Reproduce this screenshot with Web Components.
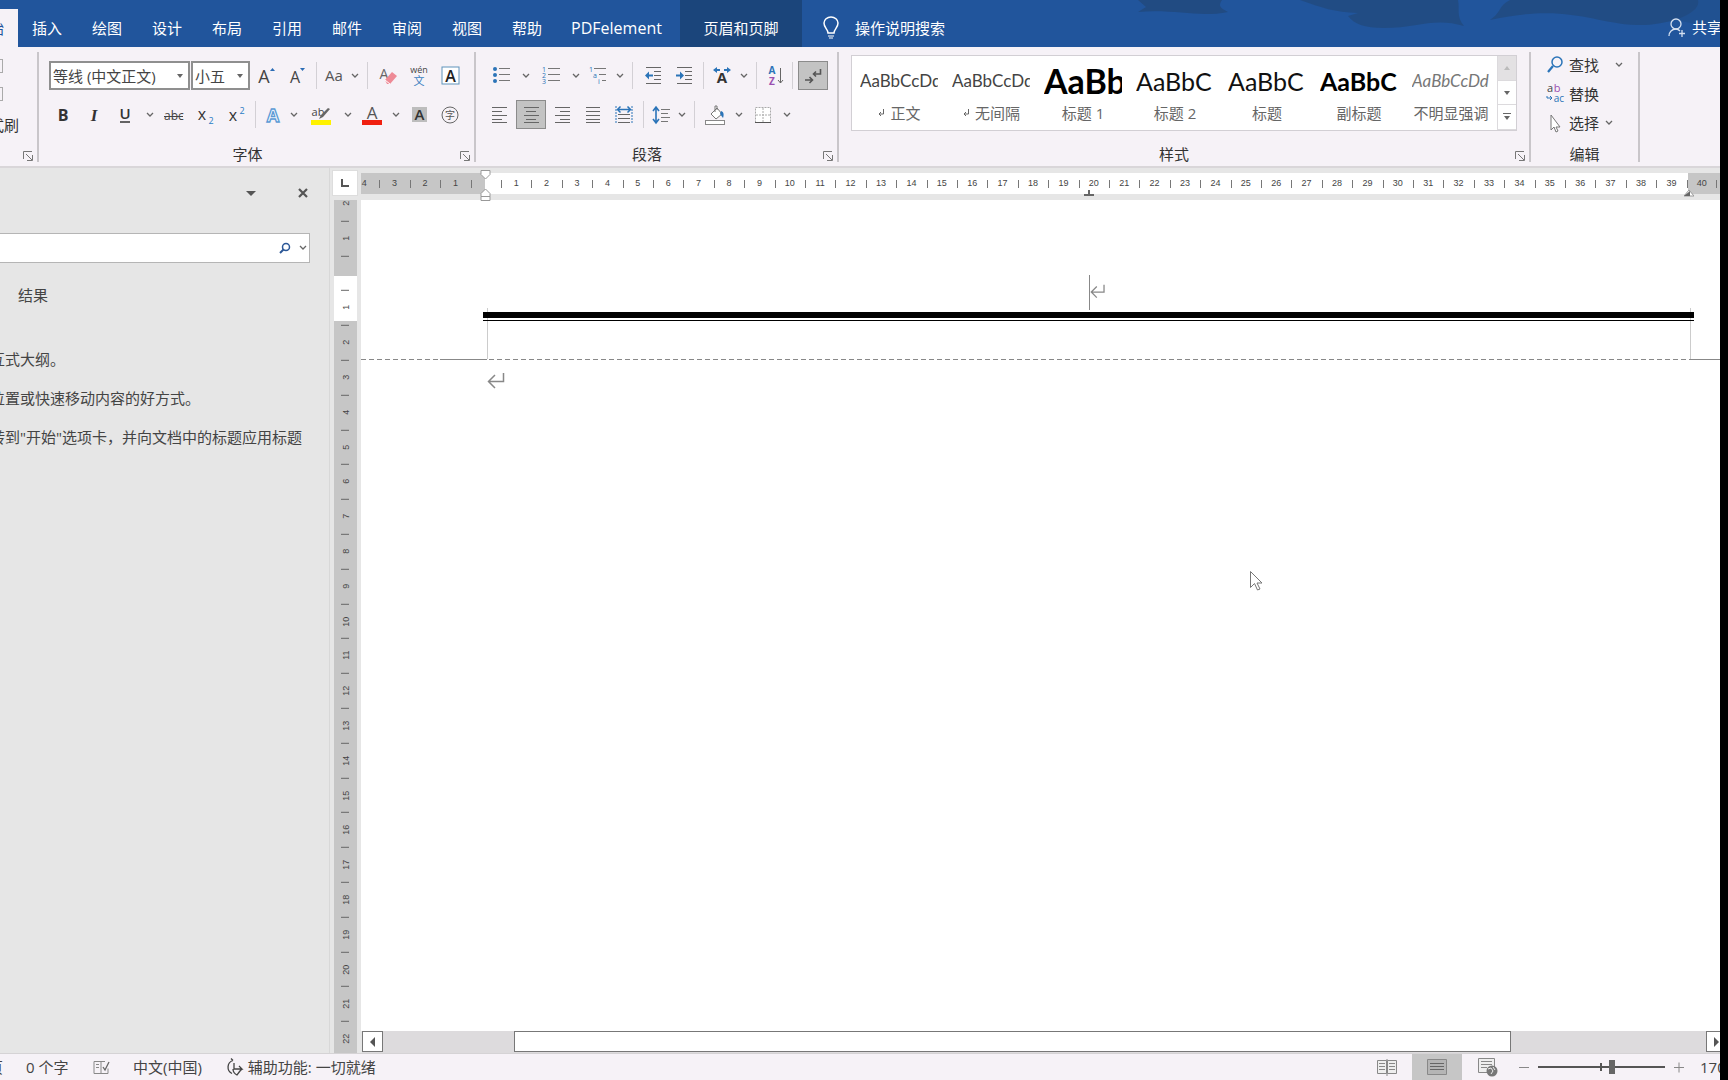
<!DOCTYPE html>
<html lang="zh-CN">
<head>
<meta charset="utf-8">
<title>文档</title>
<style>
html,body{margin:0;height:100%}
body{font-family:"Open Sans","Noto Sans CJK SC",sans-serif;font-size:15px;line-height:20px;color:#333;background:#000;overflow:hidden}
</style>
</head>
<body>
<word-app></word-app>
<script>
const BASE = `*{box-sizing:border-box}:host{display:block}[hidden]{display:none}
button{font:inherit;color:inherit;background:none;border:0;padding:0;margin:0;display:flex;align-items:center;justify-content:center}svg{display:block;flex:none}`;
function define(name, css, html) {
  customElements.define(name, class extends HTMLElement {
    constructor() {
      super();
      const root = this.attachShadow({ mode: 'open' });
      root.innerHTML = `<style>${BASE}${css}</style>` + (typeof html === 'function' ? html(this) : html);
    }
  });
}
const lines = (rows, c = '#666') => rows.map(([x1, x2, y]) => `<path d="M${x1} ${y}H${x2}" stroke="${c}"/>`).join('');
const T = (x, y, s, t, extra = '') => `<text x="${x}" y="${y}" font-size="${s}" text-anchor="middle" ${extra}>${t}</text>`;
/* every icon is drawn in a 24 by 24 box */
const ICONS = {
  grow: T(10, 19, 18, 'A', 'fill="#444"') + '<path d="M16 7h5l-2.500-3z" fill="#2b6cb5"/>',
  shrink: T(10, 19, 16, 'A', 'fill="#444"') + '<path d="M15 4h5l-2.500 3z" fill="#2b6cb5"/>',
  aa: T(12, 17, 15, 'Aa', 'fill="#555"'),
  eraser: T(8, 15, 14, 'A', 'fill="#666"') + '<path d="M9 16l7-8 5 4-7 8h-3z" fill="#ee8a96"/><path d="M9 16l5 4" stroke="#fff"/>',
  wen: T(12, 9, 9, 'wén', 'fill="#444"') + T(12, 21, 11, '文', 'fill="#3a7fc0"'),
  boxa: '<rect x="4" y="3" width="17" height="17" fill="#fff" stroke="#5f93bb"/>' + T(12.5, 18, 16, 'A', 'fill="#222" font-weight="600"'),
  bold: T(11, 18, 16, 'B', 'fill="#333" font-weight="700"'),
  italic: T(11, 18, 17, 'I', 'fill="#333" font-style="italic" font-weight="600" font-family="Liberation Serif"'),
  underline: T(11, 16, 15, 'U', 'fill="#333" font-weight="600"') + '<path d="M6 19h10" stroke="#333" stroke-width="1.500"/>',
  strike: T(12, 17, 12, 'abc', 'fill="#444"') + '<path d="M2 13.500h19" stroke="#444"/>',
  sub: T(9, 17, 16, 'x', 'fill="#333"') + T(18, 21, 9, '2', 'fill="#2b7cc5"'),
  sup: T(9, 18, 16, 'x', 'fill="#333"') + T(18, 11, 9, '2', 'fill="#2b7cc5"'),
  outline: T(12, 19, 18, 'A', 'fill="#f3f8fd" stroke="#5b9bd5" stroke-width="1.300" font-weight="700"'),
  marker: T(9, 13, 11, 'ab', 'fill="#444"') + '<path d="M10 16l2-4 7-7 2 1-7 8z" fill="#666"/><rect x="2" y="17" width="20" height="5" fill="#fff200"/>',
  color: T(12, 16, 17, 'A', 'fill="#555"') + '<rect x="2" y="17" width="20" height="5" fill="#f02010"/>',
  shade: '<rect x="4" y="4" width="15" height="15" fill="#bdbdbd"/>' + T(11.5, 17, 15, 'A', 'fill="#333" font-weight="600"'),
  circled: '<circle cx="11" cy="12" r="8" fill="none" stroke="#666"/>' + T(11, 16, 10, '字', 'fill="#555"'),
  bullets: '<g fill="#2b74b8"><circle cx="6" cy="5" r="2"/><circle cx="6" cy="11" r="2"/><circle cx="6" cy="17" r="2"/></g>' + lines([[10, 21, 4.5], [10, 21, 10.5], [10, 21, 16.5]], '#777'),
  numbers: T(5, 8, 7, '1', 'fill="#2b74b8"') + T(5, 14, 7, '2', 'fill="#2b74b8"') + T(5, 20, 7, '3', 'fill="#2b74b8"') + lines([[9, 21, 4.5], [9, 21, 10.5], [9, 21, 16.5]], '#777'),
  multi: T(5, 8, 7, '1', 'fill="#2b74b8"') + T(9, 14, 7, 'a', 'fill="#2b74b8"') + T(13, 20, 7, 'i', 'fill="#2b74b8"') + lines([[8, 20, 4.5], [13, 20, 10.5], [16, 20, 16.5]], '#777'),
  outdent: lines([[5, 20, 3.5], [13, 20, 7.5], [13, 20, 11.5], [13, 20, 15.500], [5, 20, 19.5]]) + '<path d="M4 11.500l4-4v3h4v2h-4v3z" fill="#2b74b8"/>',
  indent: lines([[5, 20, 3.5], [13, 20, 7.5], [13, 20, 11.5], [13, 20, 15.500], [5, 20, 19.5]]) + '<path d="M12 11.500l-4-4v3h-4v2h4v3z" fill="#2b74b8"/>',
  asian: T(12, 19, 15, 'A', 'fill="#333" font-weight="700"') + '<path d="M3 6l4-3v2h3v2H7v2zM21 6l-4-3v2h-3v2h3v2z" fill="#2b74b8"/>',
  sort: T(9, 10, 10, 'A', 'fill="#2b74b8" font-weight="700"') + T(9, 21, 10, 'Z', 'fill="#9a4fb0" font-weight="700"') + '<path d="M17.500 4v15M15 16l2.500 3 2.500-3" fill="none" stroke="#666"/>',
  marks: '<path d="M19.500 5v5h-7M15 7.500l-2.500 2.500 2.500 2.500M4 16h7M8.500 13l3 3-3 3" fill="none" stroke="#555" stroke-width="1.600"/>',
  left: lines([[4, 19, 4.5], [4, 14, 8.5], [4, 19, 12.5], [4, 14, 16.5], [4, 19, 19.5]]),
  center: lines([[5, 20, 4.5], [7, 17, 8.5], [5, 20, 12.5], [7, 17, 16.5], [5, 20, 19.5]]),
  right: lines([[5, 20, 4.5], [10, 20, 8.5], [5, 20, 12.5], [10, 20, 16.5], [5, 20, 19.5]]),
  justify: lines([[5, 19, 4.5], [5, 19, 8.5], [5, 19, 12.5], [5, 19, 16.5], [5, 19, 19.5]]),
  spread: lines([[6, 18, 11.5], [6, 18, 15.500], [6, 18, 19.5]]) + '<path d="M4 3v17M20 3v17" stroke="#2b74b8" stroke-dasharray="2 1"/><path d="M5 6.500h14M8.500 3.500l-3 3 3 3M15.500 3.500l3 3-3 3" fill="none" stroke="#2b74b8" stroke-width="1.500"/>',
  spacing: lines([[12, 21, 6.5], [12, 19, 10.5], [12, 21, 14.5], [12, 19, 18.5]], '#777') + '<path d="M7 5v14M4 8l3-4 3 4M4 16l3 4 3-4" fill="none" stroke="#2b74b8" stroke-width="1.600"/>',
  fill: '<path d="M8 11l6-6 5 6-6 5zM12 9V3h2v4" fill="#fff" stroke="#777"/><path d="M18 8c3 1 3 4 2 7l-3-4z" fill="#2b74b8"/><rect x="2.500" y="17.500" width="19" height="4" fill="#fff" stroke="#888"/>',
  borders: '<path d="M4.500 4.500h15v15h-15z" fill="#fff" stroke="#aaa" stroke-dasharray="2 1"/><path d="M12 5v14M5 12h14" stroke="#aaa" stroke-dasharray="2 1"/><path d="M4 19.500h16" stroke="#555"/>',
  find: '<circle cx="14" cy="9" r="5" fill="none" stroke="#2b74b8" stroke-width="1.500"/><path d="M10 13l-5 6" stroke="#2b74b8" stroke-width="2.200"/>',
  replace: T(7, 10, 11, 'a', 'fill="#444"') + T(14, 10, 11, 'b', 'fill="#9a4fb0"') + T(16, 20, 10, 'ac', 'fill="#2b74b8"') + '<path d="M4 14v2h5M7 14l2 2-2 2" fill="none" stroke="#2b74b8"/>',
  pointer: '<path d="M8 4v15l3-3 2 5 2-1-2-4h4z" fill="#fff" stroke="#777"/>',
  bulb: '<path d="M9 17c0-4-4-5-4-10a7 6 0 0 1 14 0c0 5-4 6-4 10z" fill="none" stroke="#fff" stroke-width="1.500"/><path d="M9 20h6M10 22h4" stroke="#fff"/>',
  person: '<circle cx="12" cy="9" r="5" fill="none" stroke="#d5e0f0" stroke-width="1.300"/><path d="M5 21c0-4 3-7 7-7 2 0 3 1 4 2M18 15v7M15 18.500h6" fill="none" stroke="#d5e0f0" stroke-width="1.300"/>',
  proof: '<path d="M5 6.500h7v12H5zM12 6.500h4M12 18.500h7v-5M7 9.500h3M7 12.500h3" fill="none" stroke="#888"/><path d="M14 12l2 3 4-8" fill="none" stroke="#666" stroke-width="1.300"/>',
  access: '<path d="M11 5.500a7 7 0 0 0-1 13M11 5.500l-2-2M12 8v6h8l-3-3M20 14l-3 3M11 14c0 4 2 5 4 6l3-4" fill="none" stroke="#444" stroke-width="1.300"/>',
  read: '<path d="M2.500 5.500h9v13h-9zM12.500 5.500h9v13h-9zM12 4v17" fill="#eee" stroke="#888"/>' + lines([[4, 10, 8.5], [4, 10, 11.5], [4, 10, 14.5], [14, 20, 8.5], [14, 20, 11.5], [14, 20, 14.5]], '#888'),
  print: '<path d="M2.500 4.500h19v15h-19z" fill="#b5b5b5" stroke="#888"/>' + lines([[5, 19, 8.5], [5, 19, 11.5], [5, 19, 14.5]]),
  web: '<path d="M3.500 3.500h16v14h-16z" fill="#eee" stroke="#888"/>' + lines([[6, 17, 6.5], [6, 17, 9.5], [6, 12, 12.5]], '#888') + '<circle cx="17" cy="16" r="5.500" fill="#777"/><path d="M13 14l3-1 2 3-2 3M18 12l2 3" fill="none" stroke="#eee"/>',
  minus: '<path d="M7 12.500h10" stroke="#888"/>',
  plus: '<path d="M7 12.500h10M12 7.500v10" stroke="#888"/>'
};
define('word-icon', ':host{flex:none;width:24px;height:24px}', el => `<svg width="24" height="24" viewBox="0 0 24 24" aria-hidden="true">${ICONS[el.getAttribute('name')]}</svg>`);
define('word-chevron', ':host{flex:none;width:8px}', '<svg width="8" height="6" viewBox="0 0 8 6"><path d="M1 1l3 3 3-3" fill="none" stroke="#666" stroke-width="1.300"/></svg>');
define('return-mark', '', '<svg width="18" height="18" viewBox="0 0 18 18"><path d="M16.500 1v8.500H2M8 3L1.500 9.500 8 16" fill="none" stroke="#888" stroke-width="1.500"/></svg>');

define('tool-button', `:host{flex:none;width:30px}
:host([size=s]){width:24px}:host([size=m]){width:26px}:host([size=l]){width:32px}:host([size=xl]){width:36px}:host([menu]){width:16px}
button{width:100%;height:29px}:host([on]) button{background:#c3c3c3;border:1px solid #8b8b8b}`,
  el => `<button aria-label="${el.getAttribute('menu') !== null ? 'menu' : el.getAttribute('icon')}">${el.hasAttribute('menu') ? '<word-chevron></word-chevron>' : `<word-icon name="${el.getAttribute('icon')}"></word-icon>`}</button>`);
define('tool-split', ':host{flex:none;width:8px;height:27px;padding-left:3px}i{display:block;width:1px;height:100%;background:#d3d0d5}', '<i></i>');
define('tool-row', ':host{display:flex;align-items:center;gap:1px;height:29px}', '<slot></slot>');
define('ribbon-group', `:host{flex:none;display:flex;flex-direction:column;border-right:2px solid #c9c6ca;padding:9px 8px 0;height:110px}
.body{height:87px;display:flex;flex-direction:column;gap:10px}
footer{display:flex;align-items:center;height:16px;margin:-2px -5px 0 -8px;color:#333}:host([plain]) footer{margin-right:-8px}span{flex:1;text-align:center;white-space:nowrap}button{width:12px;height:12px;margin:4px 0 0 5px}`,
  el => `<div class="body"><slot></slot></div><footer><span>${el.getAttribute('label') || ''}</span>${el.hasAttribute('plain') ? '' : '<button aria-label="更多"><svg width="12" height="12" viewBox="0 0 12 12"><path d="M1.500 9V1.500H10M4 4l6 6M10.500 5v5.500H5" fill="none" stroke="#777"/></svg></button>'}</footer>`);
define('drop-box', `:host{flex:none;position:relative}select{appearance:none;display:block;width:100%;height:29px;border:2px solid #8f8f8f;border-radius:0;background:#fff;font:inherit;color:#444;padding:0 2px;margin:0}
svg{position:absolute;right:7px;top:13px;pointer-events:none}`,
  el => `<select aria-label="${el.getAttribute('label')}"><option>${el.getAttribute('value')}</option></select><svg width="6" height="4"><path d="M0 0h6L3 4z" fill="#666"/></svg>`);

define('ribbon-tabs', `:host{position:relative;display:flex;height:47px;background:#21559c;color:#fff;overflow:hidden}
.art{position:absolute;right:0;top:0}
nav{display:flex}button{width:60px;height:47px;padding-top:9px}button.now{width:18px;height:38px;margin:9px -1px 0 0;background:#f6f2f7;color:#21559c;justify-content:flex-end;padding:0 14px 0 0;overflow:hidden}
button.wide{width:123px;font-size:16px;padding-right:4px}button.ctx{width:122px;background:#1b457b}
.tell{width:auto;gap:12px;padding-left:17px}.share{position:relative;margin-left:auto;width:56px;justify-content:flex-start;gap:4px;white-space:nowrap;padding-top:6px}`,
  `<svg class="art" width="620" height="40" viewBox="0 0 620 40"><g fill="#214b82"><path d="M38 0h84c-4 6-2 8 6 12-30 6-52-3-90 0l8-5z"/><path d="M186 0h172c2 10-2 16 6 26-30-9-46 2-80 2-20 0-30-4-36-12l10-3c-24-1-36-5-58-13z" opacity=".9"/><path d="M390 20c12-8 8-14 20-20h188c4 14-32 26-62 25-44-2-70-22-146-5z" opacity=".9"/><path d="M570 0h50v28c-20-4-44-6-50-12z" opacity=".4"/></g></svg>
<nav><button class="now">始</button>${['插入', '绘图', '设计', '布局', '引用', '邮件', '审阅', '视图', '帮助'].map(t => `<button>${t}</button>`).join('')}<button class="wide">PDFelement</button><button class="ctx">页眉和页脚</button></nav>
<button class="tell"><word-icon name="bulb"></word-icon>操作说明搜索</button><button class="share"><word-icon name="person"></word-icon>共享</button>`);

define('style-card', `:host{flex:none;width:92px}button{width:100%;height:74px;flex-direction:column;justify-content:flex-start;color:#666}
.p{width:78px;height:44px;line-height:50px;overflow:hidden;white-space:nowrap;text-align:left;font-family:Lato,sans-serif;font-size:17px;color:#444}
.mid{font-size:25px;color:#111}.big{font-size:34px;font-weight:700;color:#000}.bold{font-size:25px;font-weight:700;color:#000}.it{font-style:italic;color:#777}
.n{display:flex;align-items:center;gap:5px;height:25px;white-space:nowrap}`,
  el => `<button><span class="p ${el.getAttribute('kind') || ''}">${el.getAttribute('sample')}</span><span class="n">${el.hasAttribute('mark') ? '<svg width="8" height="8" viewBox="0 0 8 8"><path d="M6.500 0v5H2M4 3L2 5l2 2" fill="none" stroke="#666"/></svg>' : ''}${el.getAttribute('name')}</span></button>`);
define('style-gallery', `:host{display:flex;flex:none;height:76px;margin:-6px 4px 0 4px;border:1px solid #d2cfd4;background:#fff;padding-left:1px}
.cards{display:flex;flex:1}.nav{width:19px;display:flex;flex-direction:column;border-left:1px solid #dcdadd}.nav button{flex:1;border-bottom:1px solid #dcdadd}.nav button:first-child{background:#e3e1e3}`,
  `<div class="cards"><style-card mark sample="AaBbCcDd" name="正文"></style-card><style-card mark sample="AaBbCcDd" name="无间隔"></style-card><style-card kind="big" sample="AaBb" name="标题 1"></style-card><style-card kind="mid" sample="AaBbC" name="标题 2"></style-card><style-card kind="mid" sample="AaBbC" name="标题"></style-card><style-card kind="bold" sample="AaBbC" name="副标题"></style-card><style-card kind="it" sample="AaBbCcDd" name="不明显强调"></style-card></div>
<div class="nav"><button aria-label="上"><svg width="6" height="4"><path d="M0 4h6L3 0z" fill="#bbb"/></svg></button><button aria-label="下"><svg width="6" height="4"><path d="M0 0h6L3 4z" fill="#666"/></svg></button><button aria-label="全部"><svg width="8" height="8"><path d="M0 .5h8" stroke="#666"/><path d="M1 3h6L4 7z" fill="#666"/></svg></button></div>`);

const b = (icon, size = '', on = '') => `<tool-button icon="${icon}" ${size && `size="${size}"`} ${on}></tool-button>`;
const m = '<tool-button menu></tool-button>', s = '<tool-split></tool-split>';
define('word-ribbon', `:host{display:flex;height:121px;background:#f6f2f7;padding-top:5px;border-bottom:2px solid #d9d6d9;overflow:hidden}
.clip{width:39px}.font{width:437px}.para{width:363px}.styles{width:692px}.edit{width:109px}
.font{padding-left:10px}.para{padding-left:9px}.name{width:141px}.size{width:59px}
.old{display:flex;flex-direction:column;margin:-2px 0 0 -8px;gap:14px}.old i{width:3px;height:14px;border:1px solid #aaa;border-left:0}.old span{width:20px;display:flex;justify-content:flex-end;white-space:nowrap;margin-left:-1px}
.edits{display:flex;flex-direction:column;margin:-11px 0 0 4px}.edits button{justify-content:flex-start;gap:2px;height:29px;white-space:nowrap}.find word-chevron{margin-left:14px}.pick word-chevron{margin-left:4px}`,
  `<ribbon-group class="clip"><div class="old"><i></i><i></i><span>式刷</span></div></ribbon-group>
<ribbon-group class="font" label="字体"><tool-row><drop-box class="name" label="字体" value="等线 (中文正文)"></drop-box><drop-box class="size" label="字号" value="小五"></drop-box>${b('grow')}${b('shrink')}${s}${b('aa', 's')}${m}${s}${b('eraser')}${b('wen')}${b('boxa')}</tool-row>
<tool-row>${b('bold')}${b('italic')}${b('underline')}${m}${b('strike')}${b('sub')}${b('sup')}${s}${b('outline', 's')}${m}${b('marker', 'xl')}${m}${b('color')}${m}${b('shade')}${b('circled')}</tool-row></ribbon-group>
<ribbon-group class="para" label="段落"><tool-row>${b('bullets', 'l')}${m}${b('numbers', 'l')}${m}${b('multi', 'm')}${m}${s}${b('outdent')}${b('indent')}${s}${b('asian', 'm')}${m}${s}${b('sort', 'm')}${s}${b('marks', '', 'on')}</tool-row>
<tool-row>${b('left')}${b('center', '', 'on')}${b('right')}${b('justify')}${b('spread')}${s}${b('spacing', 's')}${m}${s}${b('fill')}${m}${b('borders')}${m}</tool-row></ribbon-group>
<ribbon-group class="styles" label="样式"><style-gallery></style-gallery></ribbon-group>
<ribbon-group class="edit" label="编辑" plain><div class="edits"><button class="find"><word-icon name="find"></word-icon>查找<word-chevron></word-chevron></button><button><word-icon name="replace"></word-icon>替换</button><button class="pick"><word-icon name="pointer"></word-icon>选择<word-chevron></word-chevron></button></div></ribbon-group>`);

define('nav-pane', `:host{width:330px;flex:none;background:#e6e6e6;border-right:1px solid #d8d8d8;color:#444;overflow:hidden}
.top{display:flex;justify-content:flex-end;gap:40px;height:65px;padding:13px 20px 0 0}.top button{height:24px;width:12px}
.find{display:flex;align-items:center;width:310px;height:30px;background:#fff;border:1px solid #b5b5b5;border-left:0}input{flex:1;min-width:0;height:26px;border:0;outline:0;background:none;font:inherit}.find button{height:24px}
.find .menu{width:13px}.tab{margin:22px 0 0 18px}.hint{margin-top:44px}p{margin:0 0 19px;white-space:nowrap;width:330px;text-indent:-10px}`,
  `<div class="top"><button aria-label="选项"><svg width="10" height="5"><path d="M0 0h10L5 5z" fill="#555"/></svg></button><button aria-label="关闭"><svg width="12" height="12" viewBox="0 0 12 12"><path d="M2 2l8 8M10 2l-8 8" stroke="#555" stroke-width="2.200"/></svg></button></div>
<div class="find"><input aria-label="搜索文档"><button aria-label="搜索"><svg width="24" height="24" viewBox="0 0 24 24"><circle cx="14" cy="11" r="3.500" fill="none" stroke="#2b5797" stroke-width="1.500"/><path d="M11.500 13.500L8 17" stroke="#2b5797" stroke-width="2"/></svg></button><button class="menu" aria-label="搜索选项"><word-chevron></word-chevron></button></div>
<button class="tab">结果</button><div class="hint"><p>互式大纲。</p><p>位置或快速移动内容的好方式。</p><p>转到"开始"选项卡，并向文档中的标题应用标题</p></div>`);

const cells = (from, to) => Array.from({ length: to - from + 1 }, (_, i) => `<span>${Math.abs(from + i) || ''}</span>`).join('');
define('ruler-side', `:host{width:28px;flex:none;display:flex;flex-direction:column;align-items:center;gap:4px;padding-top:2px;font:9px/10px "Liberation Sans",sans-serif;color:#444;overflow:hidden}
.corner{width:26px;height:26px;background:#fff;border:1px solid #ddd;flex:none}
.rule{width:23px;flex:1;min-height:0;overflow:hidden;background:linear-gradient(#c6c6c6 76px,#fff 76px 121px,#c6c6c6 121px)}
.tape{height:870px;margin-top:-14px;display:grid;grid-auto-rows:1fr}
span{display:flex;align-items:center;justify-content:center;writing-mode:vertical-rl;transform:rotate(180deg);background:linear-gradient(#666,#666) center bottom/8px 1px no-repeat}`,
  `<button class="corner" aria-label="制表符"><svg width="8" height="8"><path d="M1 0v7h7" fill="none" stroke="#555" stroke-width="2"/></svg></button><div class="rule"><div class="tape">${cells(-2, 22)}</div></div>`);
define('ruler-top', `:host{position:relative;z-index:2;height:21px;margin:5px 0 6px;overflow:visible;font:9px/21px "Liberation Sans",sans-serif;color:#444}
.rule{height:21px;overflow:hidden;background:linear-gradient(90deg,#c6c6c6 124px,#fff 124px calc(100% - 32px),#c6c6c6 calc(100% - 32px))}
.tape{display:grid;grid-auto-flow:column;grid-auto-columns:minmax(0,1fr);margin:0 3px 0 -12px}
span{text-align:center;background:linear-gradient(#777,#777) left center/1px 8px no-repeat}span:last-child{background:linear-gradient(#777,#777) left center/1px 8px no-repeat,linear-gradient(#777,#777) right center/1px 8px no-repeat}
svg{position:absolute}.in{left:119px;top:-3px}.mid{left:calc(50% + 43px);top:17px}.end{right:26px;top:17px}`,
  `<div class="rule"><div class="tape">${cells(-4, 40)}</div></div>
<svg class="in" width="11" height="31" viewBox="0 0 11 31"><g fill="#fff" stroke="#999"><path d="M1 .5h9v4L5.500 9 1 4.500z"/><path d="M1 23.500l4.500-4.500 4.500 4.500v3H1zM1 26.500h9v4H1z"/></g></svg>
<svg class="mid" width="10" height="6"><path d="M5 0v5M0 5h10" stroke="#666" stroke-width="2"/></svg>
<svg class="end" width="10" height="7"><path d="M0 6l5-6 5 6z" fill="#fff" stroke="#999"/><path d="M0 6h6V1z" fill="#666"/></svg>`);
define('doc-page', `:host{position:relative;flex:1;min-height:0;background:#fff}
.head{height:160px;padding-top:75px;background:repeating-linear-gradient(90deg,#888 0 5px,#fff 5px 8px) left bottom/100% 1px no-repeat}
.line{display:grid;grid-template-columns:1fr 1fr;height:35px;margin:0 30px 0 126px}.caret{grid-column:2;display:flex;align-items:flex-start;padding-top:9px;border-left:1px solid #888}.caret return-mark{zoom:.85}
.bars{position:relative;z-index:1;height:12px;margin:2px 26px 0 122px;border-top:6px solid #000;padding-top:2px}.bars i{display:block;height:1px;background:#000}
.sides{position:absolute;left:126px;right:29px;top:108px;height:51px;border:1px solid #ccc;border-width:0 1px}
.solid{position:absolute;top:159px;height:1px;background:#888}.a{left:79px;width:47px}.b{right:0;width:29px}
.body{padding:12px 0 0 126px}.mouse{position:absolute;left:888px;top:370px}`,
  `<div class="head"><div class="line"><div class="caret"><return-mark></return-mark></div></div><div class="bars"><i></i></div></div><div class="sides"></div><div class="solid a"></div><div class="solid b"></div>
<div class="body"><return-mark></return-mark></div><svg class="mouse" width="15" height="22" viewBox="0 0 15 22"><path d="M1.500 1.500v16l4-4 3 6.500 2.500-1-3-6h5z" fill="#fff" stroke="#777"/></svg>`);
define('scroll-line', `:host{display:flex;height:22px;flex:none;background:#dddbdd;margin-left:1px;overflow:hidden;justify-content:space-between}
button{width:21px;height:21px;border:1px solid #777;background:#fff;flex:none}.thumb{width:997px;margin-right:64px}.r{margin-right:-7px}`,
  `<button aria-label="左"><svg width="5" height="10"><path d="M5 0v10L0 5z" fill="#555"/></svg></button><button class="thumb" aria-label="滚动"></button><button class="r" aria-label="右"><svg width="5" height="10"><path d="M0 0v10l5-5z" fill="#555"/></svg></button>`);
define('status-bar', `:host{display:flex;align-items:center;height:27px;flex:none;background:#f6f2f7;border-top:1px solid #d5d3d5;color:#444;overflow:hidden;white-space:nowrap}
.cut{width:3px;display:flex;justify-content:flex-end;overflow:hidden;margin-right:23px}button.words{width:63px;justify-content:flex-start}.lang{margin:0 20px}.acc{display:flex;align-items:center;gap:2px}
.r{display:flex;align-items:center;margin-left:auto}.v{width:50px;height:27px}.v.on{background:#c6c6c6}.z{width:24px;height:24px}
input{appearance:none;width:127px;height:20px;margin:0 2px;background:linear-gradient(#555,#555) center/100% 2px no-repeat,linear-gradient(#555,#555) 62px center/2px 8px no-repeat}
input::-webkit-slider-thumb{appearance:none;width:6px;height:14px;background:#666}button.pc{width:20px;margin-left:9px;justify-content:flex-start;overflow:hidden}`,
  `<span class="cut">页</span><button class="words">0 个字</button><word-icon name="proof"></word-icon><button class="lang">中文(中国)</button><button class="acc"><word-icon name="access"></word-icon>辅助功能: 一切就绪</button>
<div class="r"><button class="v" aria-label="阅读"><word-icon name="read"></word-icon></button><button class="v on" aria-label="页面"><word-icon name="print"></word-icon></button><button class="v" aria-label="网页"><word-icon name="web"></word-icon></button><button class="z" aria-label="缩小"><word-icon name="minus"></word-icon></button><input type="range" min="0" max="100" value="59" aria-label="缩放"><button class="z" aria-label="放大"><word-icon name="plus"></word-icon></button><button class="pc">170%</button></div>`);
define('word-app', `:host{display:flex;flex-direction:column;height:100vh;background:#e6e6e6;border-right:8px solid #000;overflow:hidden}
main{display:flex;flex:1;min-height:0}ruler-side{margin:0 2px 0 1px}.doc{flex:1;min-width:0;display:flex;flex-direction:column}ribbon-tabs,word-ribbon{flex:none}`,
  `<ribbon-tabs></ribbon-tabs><word-ribbon></word-ribbon><main><nav-pane></nav-pane><ruler-side></ruler-side><div class="doc"><ruler-top></ruler-top><doc-page></doc-page><scroll-line></scroll-line></div></main><status-bar></status-bar>`);
</script>
</body>
</html>
